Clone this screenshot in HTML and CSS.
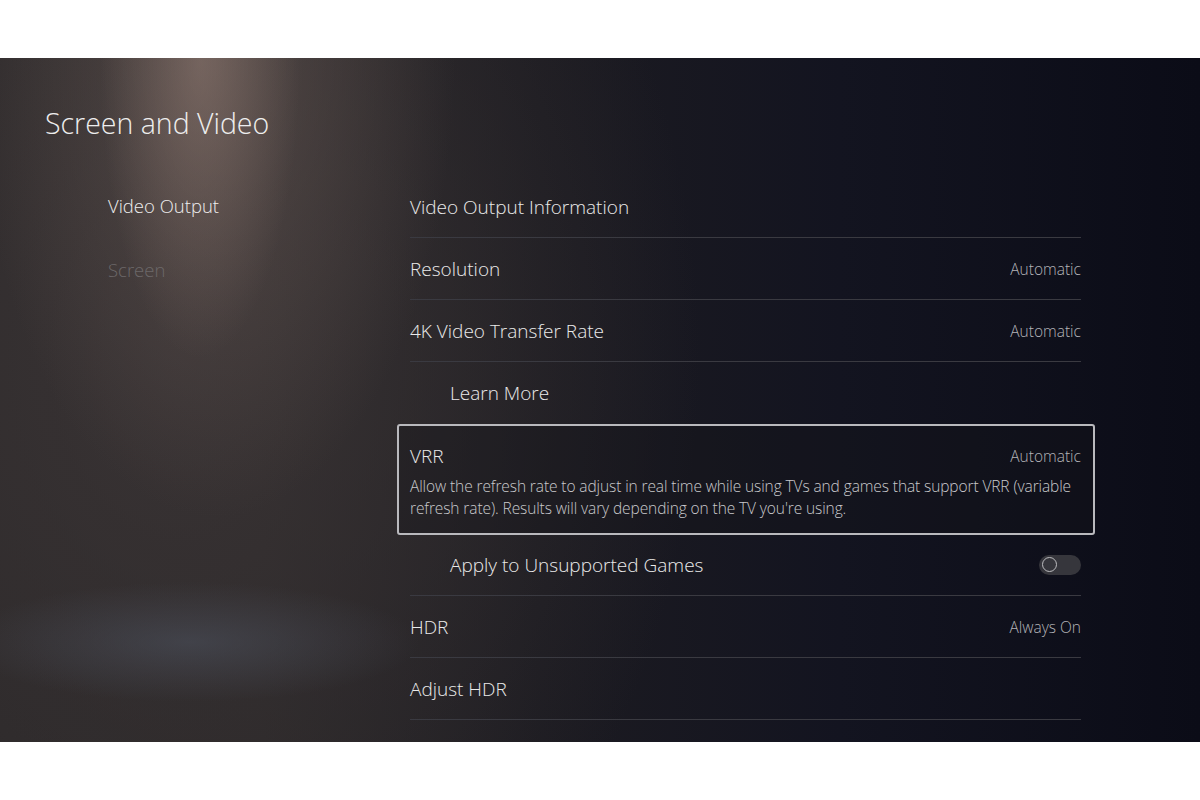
FILE: index.html
```html
<!DOCTYPE html>
<html lang="en">
<head>
    <meta charset="UTF-8">
    <meta name="viewport" content="width=device-width, initial-scale=1.0">
    <title>Screen and Video</title>
    <link rel="stylesheet" href="styles.css">
</head>
<body>
    <div class="screen">
        <h1 class="title">Screen and Video</h1>

        <div class="layout">
            <nav class="side-nav">
                <div class="nav-item active">Video Output</div>
                <div class="nav-item">Screen</div>
            </nav>

            <div class="settings">
                <div class="row">
                    <span class="label">Video Output Information</span>
                </div>
                <div class="row">
                    <span class="label">Resolution</span>
                    <span class="value">Automatic</span>
                </div>
                <div class="row">
                    <span class="label">4K Video Transfer Rate</span>
                    <span class="value">Automatic</span>
                </div>
                <div class="row sub no-line">
                    <span class="label">Learn More</span>
                </div>
                <div class="row focused">
                    <div class="focused-head">
                        <span class="label">VRR</span>
                        <span class="value">Automatic</span>
                    </div>
                    <p class="desc">Allow the refresh rate to adjust in real time while using TVs and games that support VRR (variable refresh rate). Results will vary depending on the TV you're using.</p>
                </div>
                <div class="row sub">
                    <span class="label">Apply to Unsupported Games</span>
                    <span class="toggle"><span class="knob"></span></span>
                </div>
                <div class="row">
                    <span class="label">HDR</span>
                    <span class="value">Always On</span>
                </div>
                <div class="row">
                    <span class="label">Adjust HDR</span>
                </div>
            </div>
        </div>
    </div>
</body>
</html>
```

FILE: styles.css
```css
* {
    margin: 0;
    padding: 0;
    box-sizing: border-box;
}

body {
    background: #ffffff;
    font-family: 'Open Sans', 'Noto Sans', sans-serif;
    font-weight: 300;
    color: #e9e9ea;
}

.screen {
    margin-top: 58px;
    height: 684px;
    overflow: hidden;
    background:
        radial-gradient(ellipse 100px 300px at 200px 0px, rgba(160, 135, 125, 0.45), rgba(160, 135, 125, 0) 100%),
        radial-gradient(ellipse 240px 460px at 215px 0px, rgba(110, 95, 90, 0.55), rgba(110, 95, 90, 0) 100%),
        radial-gradient(ellipse 230px 60px at 190px 584px, rgba(80, 86, 100, 0.5), rgba(80, 86, 100, 0) 100%),
        radial-gradient(ellipse 520px 700px at 180px 300px, rgba(58, 52, 53, 0.9), rgba(58, 52, 53, 0) 100%),
        linear-gradient(90deg, #2b2829 0%, #2a2728 22%, #1c1b21 45%, #131420 70%, #0b0c17 100%);
}

.title {
    font-size: 28.5px;
    font-weight: 300;
    padding: 46px 0 0 45px;
    line-height: 38px;
    color: #eeeeee;
}

.layout {
    display: flex;
    margin-top: 34px;
}

.side-nav {
    width: 410px;
    padding-left: 108px;
    margin-top: -3px;
    display: flex;
    flex-direction: column;
}

.nav-item {
    font-size: 18.5px;
    height: 64px;
    display: flex;
    align-items: center;
    color: #6c6869;
}

.nav-item.active {
    color: #eeeeee;
}

.settings {
    width: 671px;
}

.row {
    height: 62px;
    display: flex;
    align-items: center;
    justify-content: space-between;
    border-bottom: 1px solid #3a3a41;
}

.row.no-line {
    border-bottom: none;
}

.row.sub .label {
    padding-left: 40px;
}

.label {
    font-size: 19px;
    color: #eaeaea;
}

.value {
    font-size: 15.5px;
    color: #b4b4b8;
}

.row.focused {
    height: 111px;
    margin: 0 -14px -1px -13px;
    padding: 18px 12px 0 11px;
    display: block;
    border: 2px solid #b9b9bd;
    border-radius: 3px;
    background: rgba(20, 20, 26, 0.35);
}

.focused-head {
    display: flex;
    justify-content: space-between;
    align-items: center;
    height: 24px;
}

.desc {
    margin-top: 7px;
    font-size: 15.5px;
    line-height: 22px;
    color: #c9c9cc;
    letter-spacing: -0.1px;
}

.toggle {
    width: 42px;
    height: 20px;
    border-radius: 10px;
    background: #36363c;
    display: flex;
    align-items: center;
    padding-left: 3px;
}

.knob {
    width: 15px;
    height: 15px;
    border-radius: 50%;
    border: 1.5px solid #bdbdc0;
}
```
